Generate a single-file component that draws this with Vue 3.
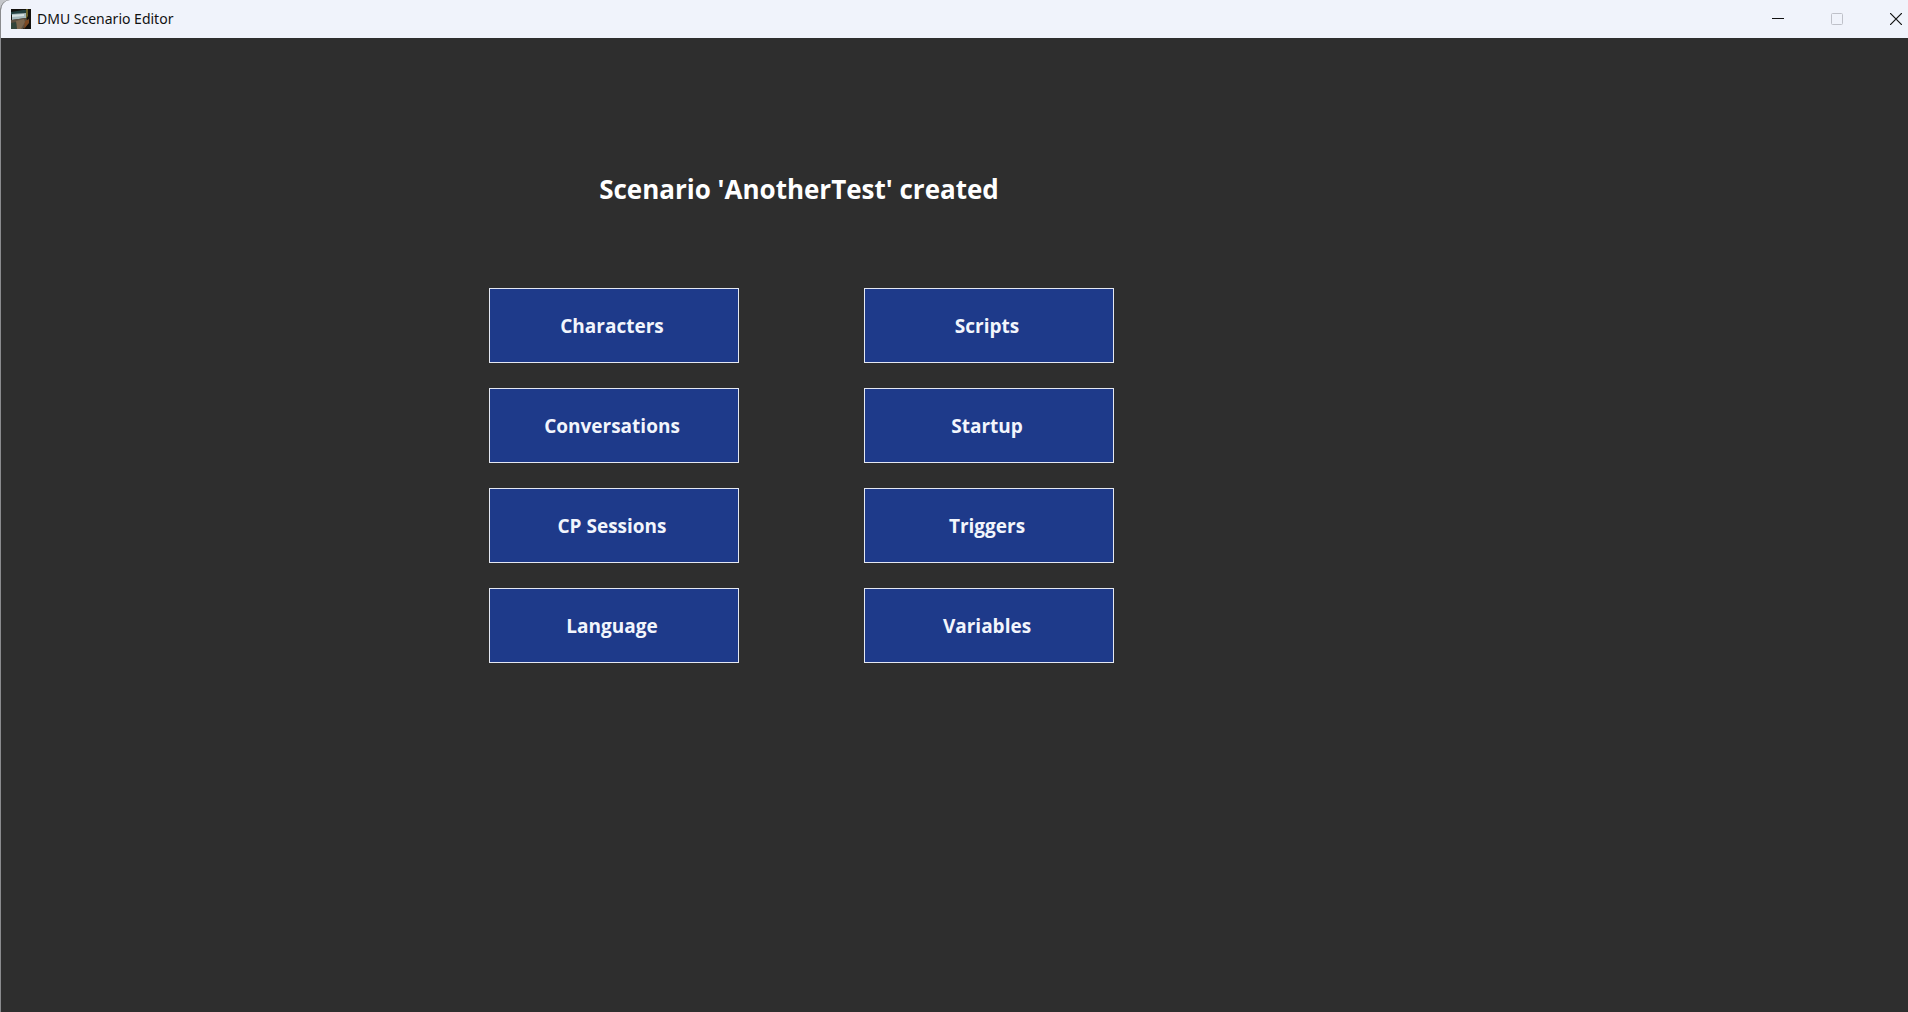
<script setup>
const sections = [
  'Characters', 'Scripts',
  'Conversations', 'Startup',
  'CP Sessions', 'Triggers',
  'Language', 'Variables',
]
</script>

<template>
  <div class="window">
    <header class="titlebar">
      <svg class="app-icon" viewBox="0 0 20 20" aria-hidden="true">
        <defs>
          <filter id="soft" x="-10%" y="-10%" width="120%" height="120%"><feGaussianBlur stdDeviation="0.6" /></filter>
          <clipPath id="frame"><rect width="20" height="20" /></clipPath>
        </defs>
        <rect width="20" height="20" fill="#14120e" />
        <g filter="url(#soft)" clip-path="url(#frame)">
          <path d="M0 3 12 1h3v3L0 6z" fill="#24403f" />
          <path d="M1 5 15 4v5L1 11z" fill="#a5b9bc" />
          <path d="M1 6 13 5v2L1 8z" fill="#d4e0df" />
          <path d="M0 11 15 9l2 4-5 7H0z" fill="#5c5040" />
          <path d="M5 12l8-2 1 3-4 7H6z" fill="#7d674f" />
          <path d="M15 0h2v7l-2 3z" fill="#69622a" />
          <path d="M14 12l4-2v4l-5 6z" fill="#7d4820" />
          <path d="M0 14 5 13 6 20H0z" fill="#33443a" />
        </g>
      </svg>
      <span class="caption">DMU Scenario Editor</span>
      <div class="controls">
        <button class="control" type="button" aria-label="Minimize">
          <svg viewBox="0 0 12 12"><path d="M0 5.5h12" stroke="#111" /></svg>
        </button>
        <button class="control" type="button" aria-label="Maximize" disabled>
          <svg viewBox="0 0 12 12"><rect x=".5" y=".5" width="11" height="11" rx="1" fill="none" stroke="#bfc1c9" /></svg>
        </button>
        <button class="control" type="button" aria-label="Close">
          <svg viewBox="0 0 12 12"><path d="M0 0l12 12M12 0 0 12" stroke="#111" stroke-width="1.2" /></svg>
        </button>
      </div>
    </header>
    <main class="content">
      <h1>Scenario 'AnotherTest' created</h1>
      <nav class="menu" aria-label="Scenario sections">
        <button v-for="name in sections" :key="name" class="section" type="button">{{ name }}</button>
      </nav>
    </main>
  </div>
</template>

<style>
body {
  background: #c4c6ca;
}
</style>

<style scoped>
.window {
  box-sizing: border-box;
  display: flex;
  flex-direction: column;
  min-height: 100vh;
  overflow: hidden;
  border-left: 1px solid #8a8b8e;
  border-top-left-radius: 10px;
  background: #2e2e2e;
  font-family: "Open Sans", "Noto Sans", sans-serif;
}

.titlebar {
  display: flex;
  align-items: center;
  height: 38px;
  padding-left: 10px;
  background: #f0f3fb;
}

.app-icon {
  width: 20px;
  height: 20px;
  margin-right: 6px;
}

.caption {
  font-family: "Noto Sans", sans-serif;
  font-size: 14px;
  line-height: 20px;
  color: #111;
}

.controls {
  display: flex;
  gap: 47px;
  margin-left: auto;
  padding-right: 6px;
}

.control {
  width: 12px;
  height: 12px;
  padding: 0;
  border: 0;
  background: none;
}

.control svg {
  display: block;
  width: 12px;
  height: 12px;
}

.content {
  display: flex;
  flex-direction: column;
  align-items: center;
  box-sizing: border-box;
  width: 100%;
  max-width: 1600px;
  padding: 131px 0 60px;
}

h1 {
  margin: 0 0 79px;
  padding-right: 4px;
  font-size: 26px;
  font-weight: 700;
  line-height: 40px;
  color: #fff;
}

.menu {
  display: grid;
  grid-template-columns: repeat(2, 250px);
  gap: 25px 125px;
}

.section {
  height: 75px;
  padding: 0 3px 0 0;
  border: 1px solid #e4e8f2;
  background: #1e3a8a;
  font-family: inherit;
  font-size: 19px;
  font-weight: 700;
  line-height: 26px;
  color: #f2f5fc;
}
</style>
